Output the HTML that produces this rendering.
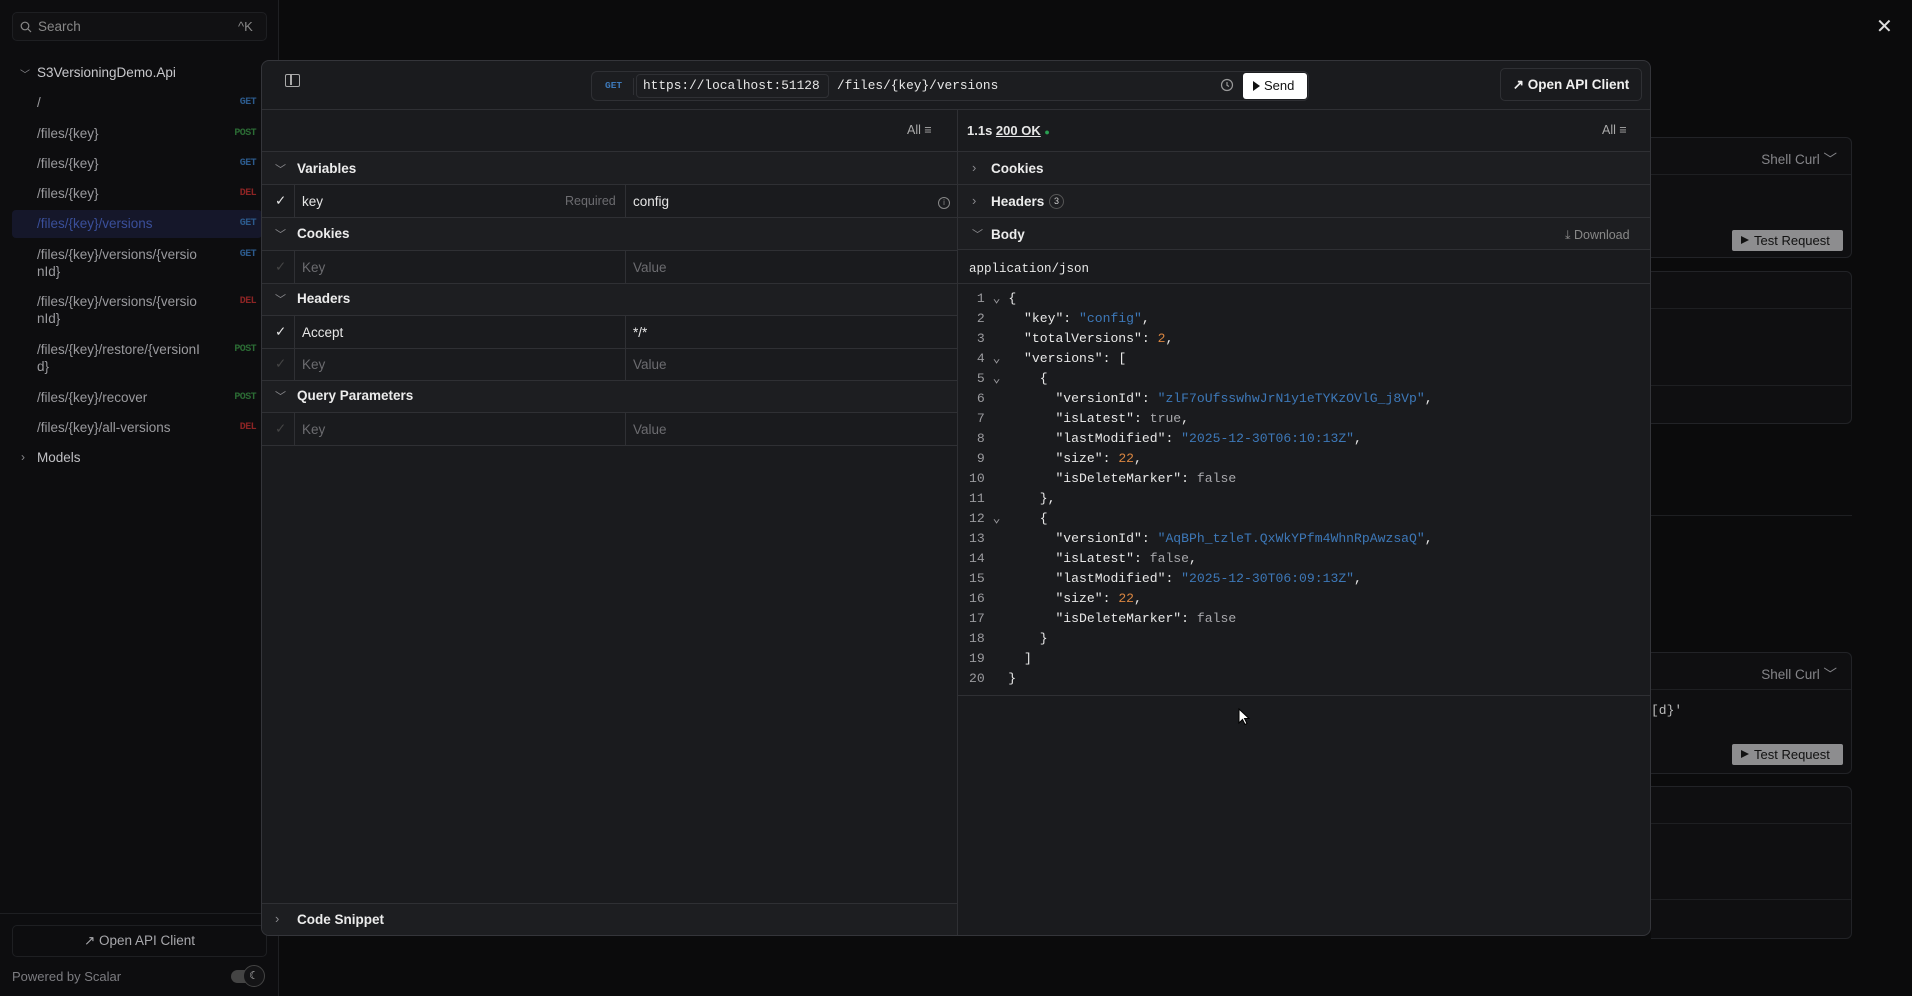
<!DOCTYPE html>
<html><head><meta charset="utf-8"><style>
*{box-sizing:border-box;margin:0;padding:0}
body{width:1912px;height:996px;overflow:hidden;background:#0b0b0c;font-family:"Liberation Sans",sans-serif;color:#e6e6e6;position:relative;font-size:13px}
.a{position:absolute}
.side{left:0;top:0;width:279px;height:996px;background:#0d0d0f;border-right:1px solid #1f2023}
.si{position:absolute;left:37px;color:#9a9a9e;font-size:13.5px;line-height:17px}
.m{position:absolute;right:22px;font-size:10px;font-weight:bold;font-family:"Liberation Mono",monospace;letter-spacing:-.6px}
.get{color:#2c5a8c}.post{color:#2b6b34}.del{color:#8c2424}
.modal{left:261px;top:60px;width:1390px;height:876px;background:#1a1b1e;border:1px solid #34353a;border-radius:8px;overflow:hidden}
.hl{position:absolute;height:1px;background:#2f3034}
.vl{position:absolute;width:1px;background:#2f3034}
.row{position:absolute;font-size:13.5px}
.sec{font-weight:bold;color:#ececec}
.chev{position:absolute;color:#8a8a8e;font-size:11px}
.ph{color:#6c6c70}
.code{font-family:"Liberation Mono",monospace;font-size:13.1px;line-height:20px;white-space:pre;color:#e8e8e8}
.ln{color:#9a9a9e}
.s{color:#3d78b8}.n{color:#d88540}.b{color:#a8a8ac}
.card{position:absolute;left:1651px;width:201px;border:1px solid #222327;border-left:none;border-radius:0 6px 6px 0;background:#0f0f11}
.tr{position:absolute;right:8px;width:111px;height:21px;background:#8d8d8f;color:#111;font-size:13px;line-height:21px;padding-left:22px;border-radius:2px}
.tr:before{content:"";position:absolute;left:9px;top:6px;border-left:8px solid #111;border-top:4.5px solid transparent;border-bottom:4.5px solid transparent}
.sc{position:absolute;right:14px;color:#858589;font-size:13.5px}
</style></head><body>

<div class="card" style="top:137px;height:121px"><div class="hl" style="left:0;right:0;top:36px;background:#1e1f22"></div><div class="sc" style="top:10px">Shell Curl ﹀</div><div class="tr" style="top:92px">Test Request</div></div>
<div class="card" style="top:271px;height:153px"><div class="hl" style="left:0;right:0;top:36px;background:#1e1f22"></div><div class="hl" style="left:0;right:0;top:113px;background:#1e1f22"></div></div>
<div class="hl" style="left:1651px;width:201px;top:515px;background:#1e1f22"></div>
<div class="card" style="top:652px;height:122px"><div class="hl" style="left:0;right:0;top:36px;background:#1e1f22"></div><div class="sc" style="top:10px">Shell Curl ﹀</div><div class="a" style="left:0;top:50px;font-family:'Liberation Mono',monospace;color:#bbb;font-size:13px">[d}'</div><div class="tr" style="top:91px">Test Request</div></div>
<div class="card" style="top:786px;height:153px"><div class="hl" style="left:0;right:0;top:36px;background:#1e1f22"></div><div class="hl" style="left:0;right:0;top:112px;background:#1e1f22"></div></div>
<div class="a" style="left:1876px;top:14px;color:#ddd;font-size:20px">✕</div>

<div class="a side">
 <div class="a" style="left:12px;top:12px;width:255px;height:29px;border:1px solid #1e1f22;border-radius:5px;background:#111113"></div>
 <svg class="a" style="left:20px;top:21px" width="12" height="12" viewBox="0 0 12 12"><circle cx="5" cy="5" r="3.8" fill="none" stroke="#888" stroke-width="1.2"/><path d="M8 8l3 3" stroke="#888" stroke-width="1.2"/></svg>
 <div class="a" style="left:38px;top:19px;color:#888;font-size:13.5px">Search</div>
 <div class="a" style="left:238px;top:19px;color:#888;font-size:13px">^K</div>
 <div class="a" style="left:20px;top:66px;color:#8a8a8e;font-size:10px">﹀</div>
 <div class="a" style="left:37px;top:65px;color:#c8c8cc;font-size:13.5px">S3VersioningDemo.Api</div>
 <div class="a" style="left:12px;top:210px;width:250px;height:28px;background:#15172a;border-radius:4px"></div>
 <div class="si" style="top:94px">/</div><div class="m get" style="top:97px">GET</div>
 <div class="si" style="top:125px">/files/{key}</div><div class="m post" style="top:128px">POST</div>
 <div class="si" style="top:155px">/files/{key}</div><div class="m get" style="top:158px">GET</div>
 <div class="si" style="top:185px">/files/{key}</div><div class="m del" style="top:188px">DEL</div>
 <div class="si" style="top:215px;color:#3a4f9a">/files/{key}/versions</div><div class="m get" style="top:218px">GET</div>
 <div class="si" style="top:246px">/files/{key}/versions/{versio<br>nId}</div><div class="m get" style="top:249px">GET</div>
 <div class="si" style="top:293px">/files/{key}/versions/{versio<br>nId}</div><div class="m del" style="top:296px">DEL</div>
 <div class="si" style="top:341px">/files/{key}/restore/{versionI<br>d}</div><div class="m post" style="top:344px">POST</div>
 <div class="si" style="top:389px">/files/{key}/recover</div><div class="m post" style="top:392px">POST</div>
 <div class="si" style="top:419px">/files/{key}/all-versions</div><div class="m del" style="top:422px">DEL</div>
 <div class="a" style="left:21px;top:450px;color:#8a8a8e;font-size:12px">›</div>
 <div class="si" style="top:449px;color:#c0c0c4">Models</div>
 <div class="hl" style="left:0;width:279px;top:913px;background:#1e1f22"></div>
 <div class="a" style="left:12px;top:925px;width:255px;height:32px;border:1px solid #1e1f22;border-radius:5px;text-align:center;line-height:30px;color:#a8a8ac;font-size:13.5px">↗ Open API Client</div>
 <div class="a" style="left:12px;top:969px;color:#7c7c80;font-size:13px">Powered by Scalar</div>
 <div class="a" style="left:231px;top:970px;width:22px;height:13px;background:#444;border-radius:7px"></div>
 <div class="a" style="left:243px;top:965px;width:22px;height:22px;border:1px solid #444;border-radius:50%;background:#141416;color:#bbb;font-size:11px;text-align:center;line-height:20px">☾</div>
</div>

<div class="a modal">
 <div class="a" style="left:23px;top:13px;width:15px;height:13px;border:1.5px solid #aaa;border-radius:2px"><div class="a" style="left:4px;top:0;width:1.5px;height:10px;background:#aaa"></div></div>
 <div class="a" style="left:329px;top:10px;width:718px;height:30px;border:1px solid #2f3034;border-radius:6px;background:#1c1d20"></div>
 <div class="a" style="left:343px;top:19px;color:#3d78b8;font-size:9.5px;font-weight:bold;font-family:'Liberation Mono',monospace">GET</div>
 <div class="vl" style="left:371px;top:17px;height:17px"></div>
 <div class="a code" style="left:374px;top:13px;height:24px;width:193px;border:1px solid #2f3034;border-radius:4px;padding-left:6px;line-height:22px;font-size:12.8px">https://localhost:51128</div>
 <div class="a code" style="left:575px;top:13px;line-height:24px;font-size:12.8px">/files/{key}/versions</div>
 <svg class="a" style="left:958px;top:17px" width="14" height="14" viewBox="0 0 14 14"><circle cx="7" cy="7" r="5.5" fill="none" stroke="#999" stroke-width="1.2"/><path d="M7 4v3.3l2 1.2" fill="none" stroke="#999" stroke-width="1.2"/></svg>
 <div class="a" style="left:981px;top:12px;width:64px;height:26px;background:#fff;border-radius:3px;color:#111;font-size:13px;line-height:26px;padding-left:21px">Send</div>
 <div class="a" style="left:991px;top:20px;border-left:7px solid #111;border-top:5px solid transparent;border-bottom:5px solid transparent"></div>
 <div class="a" style="left:1238px;top:7px;width:142px;height:33px;border:1px solid #2f3034;border-radius:5px;color:#f0f0f0;font-size:13.5px;font-weight:bold;line-height:31px;text-align:center">↗ Open API Client</div>
 <div class="hl" style="left:0;right:0;top:48px"></div>
 <div class="vl" style="left:695px;top:48px;height:828px"></div>

 <div class="a" style="left:645px;top:62px;color:#aaa;font-size:12.5px">All ≡</div>
 <div class="hl" style="left:0;width:695px;top:90px"></div>
 <div class="a" style="left:0;top:91px;width:695px;height:293px;background:#1d1e21"></div>
 <div class="chev" style="left:13px;top:100px">﹀</div><div class="row sec" style="left:35px;top:100px">Variables</div>
 <div class="hl" style="left:0;width:695px;top:123px"></div>
 <div class="a" style="left:0;top:124px;width:695px;height:32px;background:#1a1b1e"></div>
 <div class="row" style="left:13px;top:132px">✓</div><div class="vl" style="left:32px;top:124px;height:32px"></div>
 <div class="row" style="left:40px;top:133px">key</div><div class="row ph" style="left:303px;top:133px;font-size:12.5px">Required</div>
 <div class="vl" style="left:363px;top:124px;height:32px"></div><div class="row" style="left:371px;top:133px">config</div>
 <div class="a" style="left:676px;top:136px;width:12px;height:12px;border:1px solid #888;border-radius:50%;font-size:8px;text-align:center;color:#888;line-height:10px">i</div>
 <div class="hl" style="left:0;width:695px;top:156px"></div>
 <div class="chev" style="left:13px;top:165px">﹀</div><div class="row sec" style="left:35px;top:165px">Cookies</div>
 <div class="hl" style="left:0;width:695px;top:189px"></div>
 <div class="a" style="left:0;top:190px;width:695px;height:32px;background:#1a1b1e"></div>
 <div class="row ph" style="left:13px;top:198px;color:#444">✓</div><div class="vl" style="left:32px;top:190px;height:32px"></div>
 <div class="row ph" style="left:40px;top:199px">Key</div><div class="vl" style="left:363px;top:190px;height:32px"></div><div class="row ph" style="left:371px;top:199px">Value</div>
 <div class="hl" style="left:0;width:695px;top:222px"></div>
 <div class="chev" style="left:13px;top:230px">﹀</div><div class="row sec" style="left:35px;top:230px">Headers</div>
 <div class="hl" style="left:0;width:695px;top:254px"></div>
 <div class="a" style="left:0;top:255px;width:695px;height:64px;background:#1a1b1e"></div>
 <div class="row" style="left:13px;top:263px">✓</div><div class="vl" style="left:32px;top:255px;height:64px"></div>
 <div class="row" style="left:40px;top:264px">Accept</div><div class="vl" style="left:363px;top:255px;height:64px"></div><div class="row" style="left:371px;top:264px">*/*</div>
 <div class="hl" style="left:0;width:695px;top:287px"></div>
 <div class="row ph" style="left:13px;top:295px;color:#444">✓</div>
 <div class="row ph" style="left:40px;top:296px">Key</div><div class="row ph" style="left:371px;top:296px">Value</div>
 <div class="hl" style="left:0;width:695px;top:319px"></div>
 <div class="chev" style="left:13px;top:327px">﹀</div><div class="row sec" style="left:35px;top:327px">Query Parameters</div>
 <div class="hl" style="left:0;width:695px;top:351px"></div>
 <div class="a" style="left:0;top:352px;width:695px;height:32px;background:#1a1b1e"></div>
 <div class="row ph" style="left:13px;top:360px;color:#444">✓</div><div class="vl" style="left:32px;top:352px;height:32px"></div>
 <div class="row ph" style="left:40px;top:361px">Key</div><div class="vl" style="left:363px;top:352px;height:32px"></div><div class="row ph" style="left:371px;top:361px">Value</div>
 <div class="hl" style="left:0;width:695px;top:384px"></div>
 <div class="hl" style="left:0;width:695px;top:842px"></div>
 <div class="a" style="left:0;top:843px;width:695px;height:33px;background:#1d1e21"></div>
 <div class="chev" style="left:13px;top:850px;font-size:13px">›</div><div class="row sec" style="left:35px;top:851px">Code Snippet</div>

 <div class="row" style="left:705px;top:62px;font-weight:bold;font-size:13px">1.1s <span style="text-decoration:underline">200 OK</span> <span style="color:#2aa052;font-size:9px">●</span></div>
 <div class="a" style="left:1340px;top:62px;color:#aaa;font-size:12.5px">All ≡</div>
 <div class="hl" style="left:695px;right:0;top:90px"></div>
 <div class="a" style="left:696px;top:91px;right:0;height:97px;background:#1d1e21"></div>
 <div class="chev" style="left:710px;top:99px;font-size:13px">›</div><div class="row sec" style="left:729px;top:100px">Cookies</div>
 <div class="hl" style="left:695px;right:0;top:123px"></div>
 <div class="chev" style="left:710px;top:132px;font-size:13px">›</div><div class="row sec" style="left:729px;top:133px">Headers</div>
 <div class="a" style="left:787px;top:133px;width:15px;height:15px;border:1px solid #555;border-radius:50%;font-size:9px;text-align:center;line-height:13px;color:#ccc">3</div>
 <div class="hl" style="left:695px;right:0;top:156px"></div>
 <div class="chev" style="left:710px;top:165px">﹀</div><div class="row sec" style="left:729px;top:166px">Body</div>
 <div class="a" style="left:1303px;top:167px;color:#888;font-size:12.5px">⤓ Download</div>
 <div class="hl" style="left:695px;right:0;top:188px"></div>
 <div class="a code" style="left:707px;top:198px;font-size:12.5px">application/json</div>
 <div class="hl" style="left:695px;right:0;top:222px"></div>
 <div class="a code" style="left:707px;top:228px"><span class="ln"> 1 ⌄ </span>{
<span class="ln"> 2   </span>  "key": <span class="s">"config"</span>,
<span class="ln"> 3   </span>  "totalVersions": <span class="n">2</span>,
<span class="ln"> 4 ⌄ </span>  "versions": [
<span class="ln"> 5 ⌄ </span>    {
<span class="ln"> 6   </span>      "versionId": <span class="s">"zlF7oUfsswhwJrN1y1eTYKzOVlG_j8Vp"</span>,
<span class="ln"> 7   </span>      "isLatest": <span class="b">true</span>,
<span class="ln"> 8   </span>      "lastModified": <span class="s">"2025-12-30T06:10:13Z"</span>,
<span class="ln"> 9   </span>      "size": <span class="n">22</span>,
<span class="ln">10   </span>      "isDeleteMarker": <span class="b">false</span>
<span class="ln">11   </span>    },
<span class="ln">12 ⌄ </span>    {
<span class="ln">13   </span>      "versionId": <span class="s">"AqBPh_tzleT.QxWkYPfm4WhnRpAwzsaQ"</span>,
<span class="ln">14   </span>      "isLatest": <span class="b">false</span>,
<span class="ln">15   </span>      "lastModified": <span class="s">"2025-12-30T06:09:13Z"</span>,
<span class="ln">16   </span>      "size": <span class="n">22</span>,
<span class="ln">17   </span>      "isDeleteMarker": <span class="b">false</span>
<span class="ln">18   </span>    }
<span class="ln">19   </span>  ]
<span class="ln">20   </span>}</div>
 <div class="hl" style="left:695px;right:0;top:634px"></div>
 <svg class="a" style="left:976px;top:647px" width="12" height="18" viewBox="0 0 12 18"><path d="M1 1v14l3.5-3.5 2.5 5 2-1-2.5-5H11z" fill="#fff" stroke="#000" stroke-width="1"/></svg>
</div>
</body></html>
